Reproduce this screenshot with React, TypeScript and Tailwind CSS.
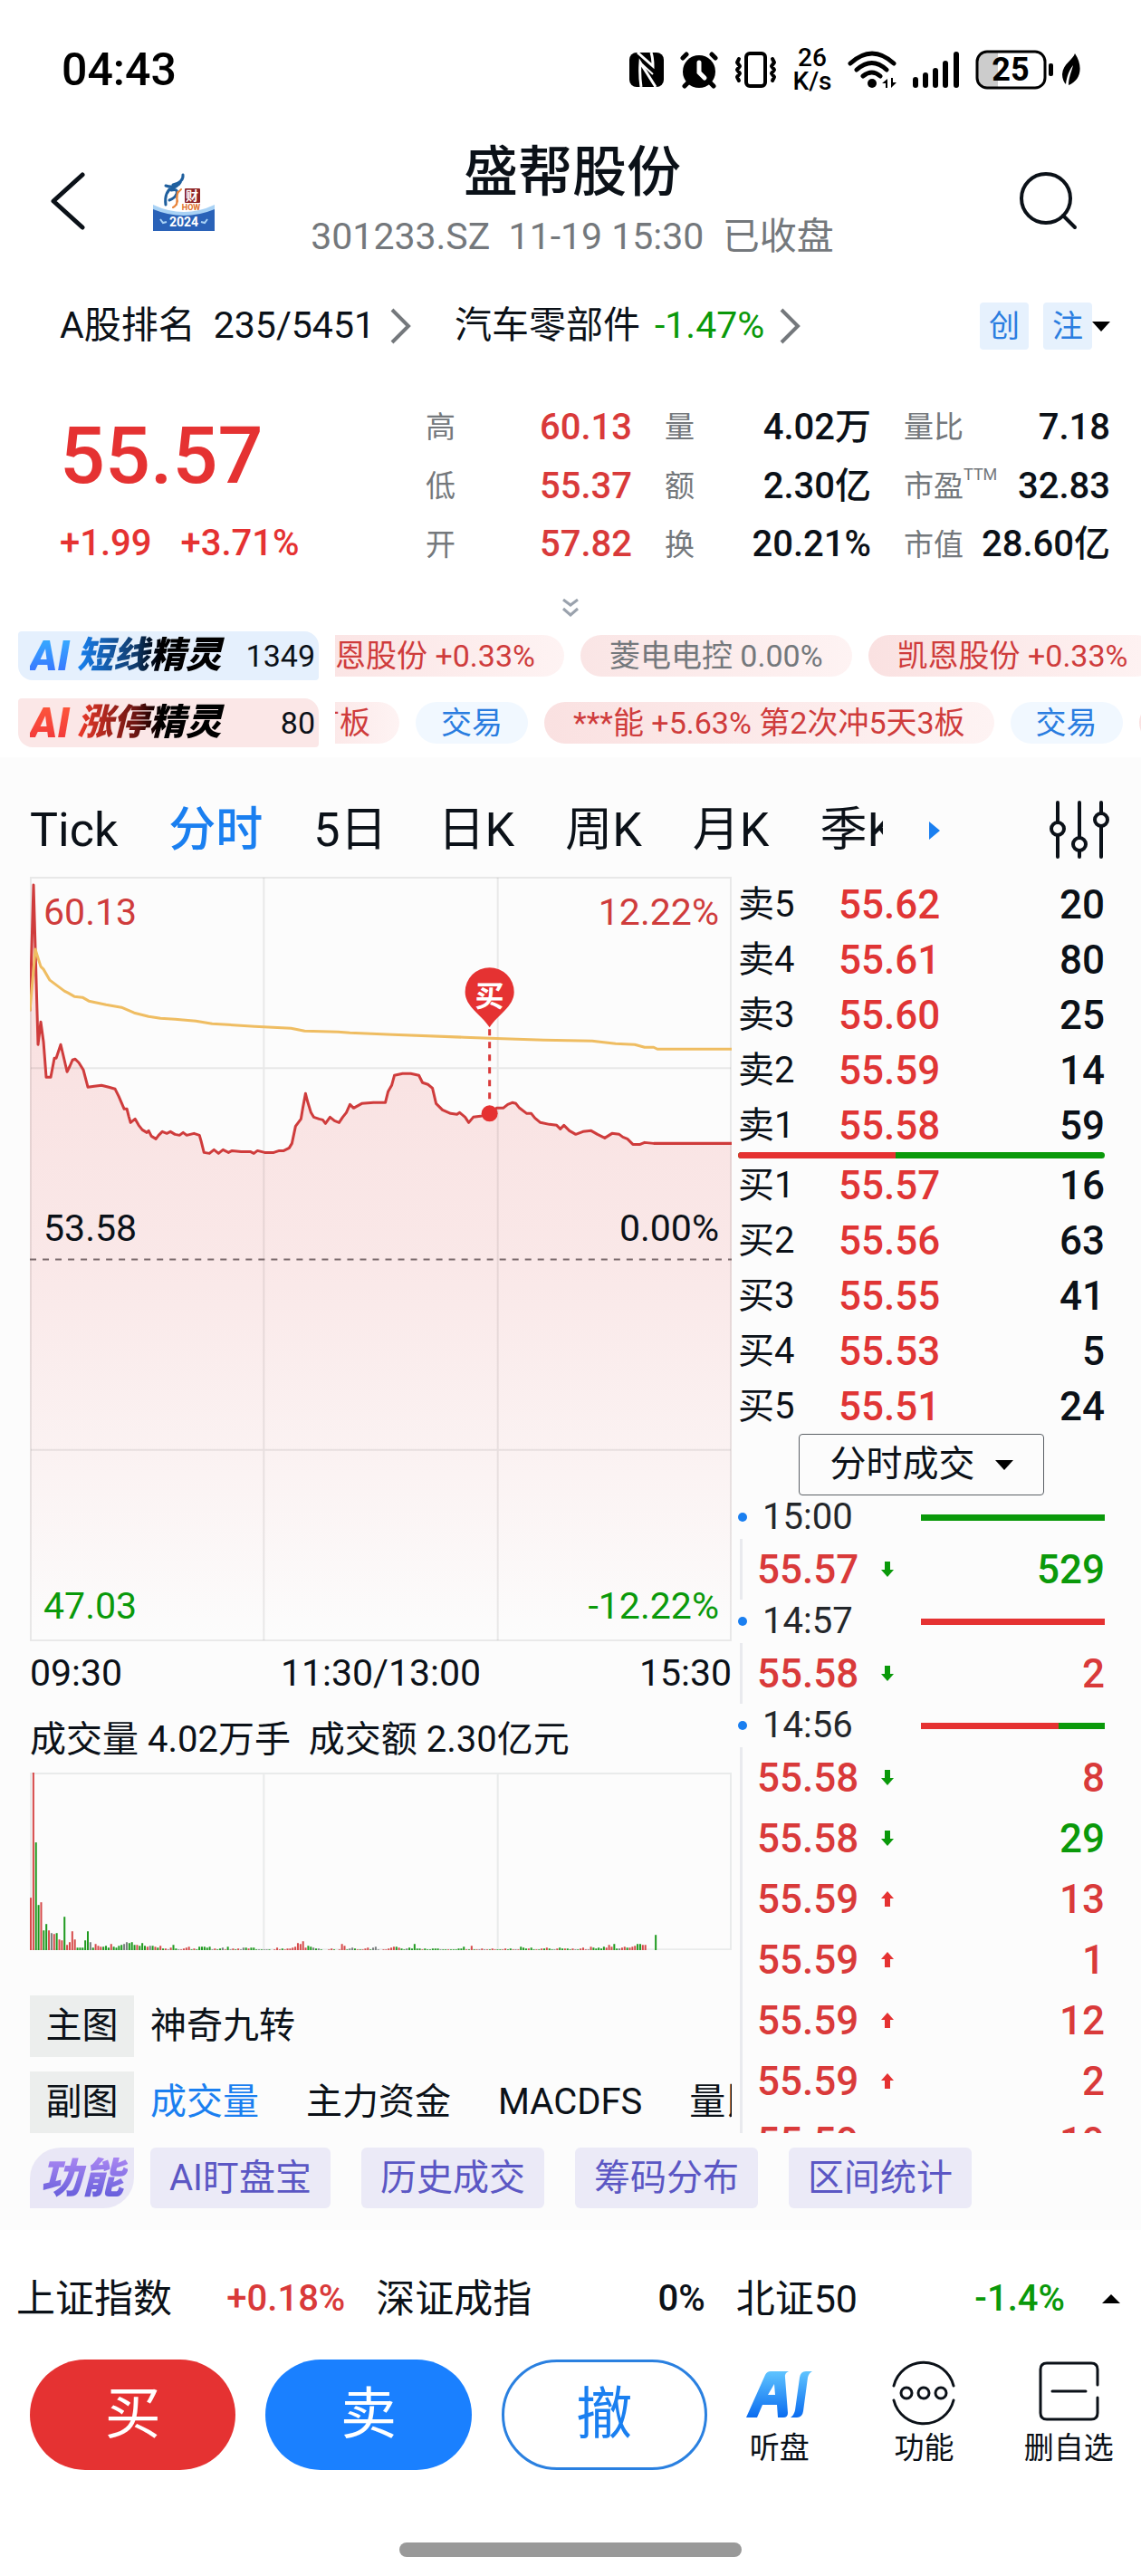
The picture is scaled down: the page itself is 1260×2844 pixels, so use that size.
import type { ReactNode } from "react";

type Quote = { label: string; sup?: string; value: string; up?: boolean };
type Level = { name: string; price: string; volume: number };
type Trade = { price: string; dir: "up" | "down"; volume: number; color: "red" | "green" };
type TradeGroup = { time: string; red: number; trades: Trade[] };

const QUOTES: Quote[] = [
  { label: "高", value: "60.13", up: true },
  { label: "量", value: "4.02万" },
  { label: "量比", value: "7.18" },
  { label: "低", value: "55.37", up: true },
  { label: "额", value: "2.30亿" },
  { label: "市盈", sup: "TTM", value: "32.83" },
  { label: "开", value: "57.82", up: true },
  { label: "换", value: "20.21%" },
  { label: "市值", value: "28.60亿" },
];

const ASKS: Level[] = [
  { name: "卖5", price: "55.62", volume: 20 },
  { name: "卖4", price: "55.61", volume: 80 },
  { name: "卖3", price: "55.60", volume: 25 },
  { name: "卖2", price: "55.59", volume: 14 },
  { name: "卖1", price: "55.58", volume: 59 },
];

const BIDS: Level[] = [
  { name: "买1", price: "55.57", volume: 16 },
  { name: "买2", price: "55.56", volume: 63 },
  { name: "买3", price: "55.55", volume: 41 },
  { name: "买4", price: "55.53", volume: 5 },
  { name: "买5", price: "55.51", volume: 24 },
];

const TRADES: TradeGroup[] = [
  { time: "15:00", red: 0, trades: [{ price: "55.57", dir: "down", volume: 529, color: "green" }] },
  { time: "14:57", red: 100, trades: [{ price: "55.58", dir: "down", volume: 2, color: "red" }] },
  {
    time: "14:56",
    red: 75,
    trades: [
      { price: "55.58", dir: "down", volume: 8, color: "red" },
      { price: "55.58", dir: "down", volume: 29, color: "green" },
      { price: "55.59", dir: "up", volume: 13, color: "red" },
      { price: "55.59", dir: "up", volume: 1, color: "red" },
      { price: "55.59", dir: "up", volume: 12, color: "red" },
      { price: "55.59", dir: "up", volume: 2, color: "red" },
      { price: "55.59", dir: "up", volume: 19, color: "red" },
    ],
  },
];

const PRICE_LINE =
  "0,148 4,9 9,185 12,160 15,182 18,221 23,221 27,200 29,200 34,185 38,202 41,215 44,209 47,202 50,201 54,205 59,213 64,232 71,231 79,230 87,232 94,234 98,242 104,256 107,256 109,264 111,271 116,267 120,274 124,279 129,282 131,280 134,286 139,289 142,285 146,281 151,283 155,281 160,284 165,285 169,282 173,285 181,283 187,285 189,292 192,304 198,305 203,301 208,305 213,301 219,304 223,302 233,303 243,303 247,305 251,302 259,304 269,304 275,302 280,302 286,299 289,294 293,275 299,267 301,255 304,239 306,247 310,260 313,265 319,267 323,268 326,272 331,265 336,269 341,271 345,265 349,260 353,251 357,255 366,250 379,249 392,249 395,237 399,230 402,219 411,217 420,217 429,219 433,227 439,229 444,233 448,250 455,257 464,261 471,262 474,260 480,265 484,271 489,265 497,264 507,261 515,255 522,255 527,251 532,249 536,250 540,255 548,261 553,261 557,266 563,271 573,273 581,274 585,278 589,274 595,280 602,284 610,281 619,280 626,284 634,288 642,283 650,284 654,287 659,289 665,295 673,295 678,293 688,294 774,294";

const AVERAGE_LINE =
  "0,148 6,80 12,99 15,102 22,114 30,120 34,123 38,126 42,128 49,132 58,133 65,137 84,141 101,144 115,150 131,154 144,156 160,157 183,159 201,162 248,165 288,167 303,170 340,171 353,172 400,174 479,177 507,178 567,180 620,181 646,184 667,185 678,188 688,188 692,190 774,190";

// one entry per minute: bar height + colour (r up, g down, k flat)
const VOLUMES = (
  "58r 196r 119g 50g 53r 22g 29g 22r 19k 18r 19g 12r 11r 37g 6r 9r 21r 12r 3g 3g 3g 11g 21g 9k 3g 7r 5r 4r 4g 5g 3g 7r 4g 3g 5g 6g 7k 9k 8g 9g 6g 6r 5g 8g 5g 4r 5k 5g 4r 3g 5r 2g 2r 1k 3r 6g 2g 1k 1r 2r 3r 4r 1g 2r 1g 4g 4g 4g 3g 4g 1k 2r 1g 2g 3k 1r 4g 1k 2r 1g 2r 1k 3k 3g 2r 3g 3g 1g 1k 1g 1k 1k 1g 0k 1r 3r 1r 2g 1r 2r 2r 3r 4r 8r 7r 10r 3r 5g 4g 3k 2g 2k 1g 0k 0r 1r 2r 1g 0k 1r 7r 5r 1g 2k 3k 2g 1r 1g 1r 2r 3r 1g 3k 4k 1k 0r 1r 1r 2r 3r 4r 4g 3r 2g 1g 2k 3g 2g 7g 2g 2g 1r 2g 1g 1g 2g 2g 2g 1k 1g 1g 1r 1g 1g 1g 2g 2g 4g 1r 1g 5r 1g 1r 1k 2r 1k 1r 1g 2r 1r 1g 1g 1r 2r 1g 2g 1r 1k 1r 4g 3g 2g 2r 3g 1g 1r 1g 2r 2g 3r 2g 1g 1k 2r 3g 2g 2r 2g 1g 2r 1k 1g 2r 3r 1r 1k 4r 3g 2g 3g 2g 4g 3r 6r 4r 7g 2g 2k 3r 4r 3g 3r 4r 5r 7g 7g 6r 6r 0k 0k 0k 17g"
).split(" ");

const BAR_FILL: Record<string, string> = { r: "#d64a4a", g: "#1f9a1f", k: "#7a7f7f" };

export default function App() {
  return (
    <div className="min-h-screen bg-white font-['Roboto','Noto_Sans_CJK_SC',sans-serif] text-[40px] text-[#0b1118] overflow-hidden">
      <StatusBar />
      <Header />
      <QuotePanel />
      <Spirits />
      <main className="bg-[#fcfcfc] pb-6">
        <ChartTabs />
        <div className="flex">
          <ChartColumn />
          <BookColumn />
        </div>
        <Features />
      </main>
      <Footer />
    </div>
  );
}

function StatusBar() {
  return (
    <div className="flex h-[154px] items-center justify-between pl-[68px] pr-[66px] text-black">
      <span className="text-[50px] font-medium">04:43</span>
      <div className="flex items-center gap-[18px]">
        <NfcIcon />
        <AlarmIcon />
        <VibrateIcon />
        <div className="flex w-[42px] flex-col items-center text-[28px] font-medium leading-[26px]">
          <span>26</span>
          <span>K/s</span>
        </div>
        <WifiIcon />
        <SignalIcon />
        <BatteryIcon />
      </div>
    </div>
  );
}

function Header() {
  return (
    <header className="flex h-[140px] items-center pl-[52px] pr-[70px]">
      <div className="flex w-[222px] items-center gap-[74px]">
        <button aria-label="返回">
          <svg className="h-[68px] w-[43px]" viewBox="0 0 43 68" fill="none" stroke="#0b1118" strokeWidth="5" strokeLinecap="round" strokeLinejoin="round">
            <path d="M39 3L7 32l32 29" />
          </svg>
        </button>
        <EventLogo />
      </div>
      <div className="flex-1 pt-[2px] text-center">
        <h1 className="text-[60px] font-medium leading-[72px]">盛帮股份</h1>
        <p className="whitespace-pre text-[41px] leading-[68px] text-[#74787c]">301233.SZ  11-19 15:30  已收盘</p>
      </div>
      <div className="flex w-[200px] justify-end">
        <button aria-label="搜索">
          <svg className="h-[68px] w-[68px]" viewBox="0 0 68 68" fill="none" stroke="#0b1118" strokeWidth="4" strokeLinecap="round">
            <circle cx="33" cy="29" r="27" />
            <path d="M52 48l13 13" />
          </svg>
        </button>
      </div>
    </header>
  );
}

function QuotePanel() {
  return (
    <section>
      <div className="mt-[30px] flex h-[72px] items-center pl-[66px] pr-[34px] text-[41px]">
        <a href="#rank" className="flex items-center">
          <span>A股排名</span>
          <span className="ml-5">235/5451</span>
          <ChevronRight />
        </a>
        <a href="#industry" className="ml-[48px] flex items-center">
          <span>汽车零部件</span>
          <span className="ml-4 text-[#0a990a]">-1.47%</span>
          <ChevronRight />
        </a>
        <div className="ml-auto flex items-center">
          <span className="flex h-[52px] w-[54px] items-center justify-center rounded bg-[#e6f1fd] text-[34px] text-[#2a7de0]">创</span>
          <span className="ml-4 flex h-[52px] w-[54px] items-center justify-center rounded bg-[#e6f1fd] text-[34px] text-[#2a7de0]">注</span>
          <svg className="h-[11px] w-5" viewBox="0 0 20 11"><path d="M0 0h20L10 11z" /></svg>
        </div>
      </div>

      <div className="mt-[45px] flex pl-[66px] pr-[34px]">
        <div className="flex-1 font-medium text-[#e53232]">
          <div className="text-[88px] leading-[124px]">55.57</div>
          <div className="flex gap-8 text-[40px] leading-[70px]">
            <span>+1.99</span>
            <span>+3.71%</span>
          </div>
        </div>
        <dl className="grid w-[756px] shrink-0 grid-cols-3 gap-x-9">
          {QUOTES.map((q) => (
            <div key={q.label} className="flex h-[62px] items-center justify-between whitespace-nowrap">
              <dt className="flex text-[33px] text-[#74787c]">
                {q.label}
                {q.sup && <sup className="top-0 text-[18px] leading-6">{q.sup}</sup>}
              </dt>
              <dd className={q.up ? "font-medium text-[#d93a3a]" : "font-medium"}>{q.value}</dd>
            </div>
          ))}
        </dl>
      </div>

      <button aria-label="展开" className="mx-auto mt-[26px] block">
        <svg className="h-6 w-5" viewBox="0 0 20 24" fill="none" stroke="#9aa2ad" strokeWidth="3">
          <path d="M2 1l8 6 8-6M2 11l8 7 8-7" />
        </svg>
      </button>
    </section>
  );
}

function Spirits() {
  return (
    <section className="mb-[11px] mt-3 space-y-5">
      <div className="flex h-[54px] items-center pl-5">
        <div className="flex h-full w-[332px] shrink-0 items-center justify-between rounded-bl-2xl rounded-tr-2xl rounded-br rounded-tl bg-[#e5f0fd] pl-[13px] pr-1">
          <span className="flex items-center font-black italic">
            <span className="bg-gradient-to-b from-[#38b6ff] to-[#3b66ff] bg-clip-text pr-2 text-[46px] leading-[54px] text-transparent">AI</span>
            <span className="bg-gradient-to-r from-[#1683f5] via-[#103a6a] via-40% to-black to-60% bg-clip-text pr-1 text-[40px] leading-[54px] text-transparent">短线精灵</span>
          </span>
          <span className="text-[34px]">1349</span>
        </div>
        <div className="ml-[18px] flex min-w-0 flex-1 gap-[18px] overflow-hidden">
          <div className="-ml-[66px] flex shrink-0">
            <Chip>凯恩股份 +0.33%</Chip>
          </div>
          <Chip tone="gray">菱电电控 0.00%</Chip>
          <Chip>凯恩股份 +0.33%</Chip>
        </div>
      </div>
      <div className="flex h-[54px] items-center pl-5">
        <div className="flex h-full w-[332px] shrink-0 items-center justify-between rounded-bl-2xl rounded-tr-2xl rounded-br rounded-tl bg-[#fbe7e7] pl-[13px] pr-1">
          <span className="flex items-center font-black italic">
            <span className="bg-gradient-to-b from-[#ff5c3b] to-[#f02f3a] bg-clip-text pr-2 text-[46px] leading-[54px] text-transparent">AI</span>
            <span className="bg-gradient-to-r from-[#f03a2a] via-[#6a1512] via-40% to-black to-60% bg-clip-text pr-1 text-[40px] leading-[54px] text-transparent">涨停精灵</span>
          </span>
          <span className="text-[34px]">80</span>
        </div>
        <div className="ml-[18px] flex min-w-0 flex-1 gap-[18px] overflow-hidden">
          <div className="-ml-[61px] flex shrink-0">
            <Chip>首板</Chip>
          </div>
          <Chip tone="blue">交易</Chip>
          <Chip>***能 +5.63% 第2次冲5天3板</Chip>
          <Chip tone="blue">交易</Chip>
          <Chip>首板</Chip>
        </div>
      </div>
    </section>
  );
}

function Chip({ tone = "red", children }: { tone?: "red" | "gray" | "blue"; children: ReactNode }) {
  const tones = {
    red: "bg-gradient-to-r from-[#fae1e1] to-[#fef3f3] text-[#cf3c3c] px-8",
    gray: "bg-gradient-to-r from-[#fae5e5] to-[#fef3f3] text-[#74787c] px-8",
    blue: "bg-[#f1f8ff] text-[#2a7de0] px-7",
  };
  return (
    <a href="#chip" className={`h-[46px] shrink-0 whitespace-nowrap rounded-full text-[34px] leading-[46px] ${tones[tone]}`}>
      {children}
    </a>
  );
}

function ChartTabs() {
  const tabs = ["Tick", "分时", "5日", "日K", "周K", "月K", "季K"];
  return (
    <div className="flex h-[132px] items-center pl-[33px] pr-[34px] pt-[30px]">
      <nav className="flex w-[942px] gap-[56px] overflow-hidden whitespace-nowrap text-[52px]">
        {tabs.map((t) => (
          <button key={t} className={t === "分时" ? "shrink-0 font-medium text-[#1a7ff0]" : "shrink-0"}>
            {t}
          </button>
        ))}
      </nav>
      <svg className="ml-[51px] h-5 w-3" viewBox="0 0 12 20"><path d="M0 0l12 10L0 20z" fill="#1a7ff0" /></svg>
      <button aria-label="设置" className="ml-auto">
        <svg className="h-[66px] w-[68px]" viewBox="0 0 68 66" fill="none" stroke="#0b1118" strokeWidth="4" strokeLinecap="round">
          <path d="M10 2v21M10 39v23M34 2v38M34 56v6M58 2v11M58 29v33" />
          <circle cx="10" cy="31" r="7" />
          <circle cx="34" cy="48" r="7" />
          <circle cx="58" cy="21" r="7" />
        </svg>
      </button>
    </div>
  );
}

function ChartColumn() {
  return (
    <div className="min-w-0 flex-1 pl-[33px]">
      <svg className="block h-auto w-full" viewBox="0 0 774 843" fontSize="41">
        <defs>
          <linearGradient id="area" x1="0" y1="0" x2="0" y2="1">
            <stop offset="0" stopColor="#e53232" stopOpacity="0.15" />
            <stop offset="0.5" stopColor="#e53232" stopOpacity="0.1" />
            <stop offset="1" stopColor="#e53232" stopOpacity="0" />
          </linearGradient>
        </defs>
        <polygon points={`${PRICE_LINE} 774,842 0,842`} fill="url(#area)" />
        <g fill="none" stroke="#000" strokeOpacity="0.08" strokeWidth="2">
          <rect x="1" y="1" width="772" height="841" />
          <path d="M258 1v841M516 1v841M1 211h772M1 632h772" />
        </g>
        <path d="M0 422h774" stroke="#7b6a6c" strokeWidth="2" strokeDasharray="7 7" />
        <polyline points={PRICE_LINE} fill="none" stroke="#cf3c3c" strokeWidth="3" strokeLinejoin="round" />
        <polyline points={AVERAGE_LINE} fill="none" stroke="#efbd62" strokeWidth="3" strokeLinejoin="round" />
        <path d="M507 168v84" stroke="#d93a3a" strokeWidth="3" strokeDasharray="7 7" />
        <circle cx="507" cy="261" r="9" fill="#e53232" />
        <path d="M507 166C498 152 480 143 480 127a27 27 0 0 1 54 0c0 16-18 25-27 39z" fill="#e53232" />
        <text x="507" y="143" fontSize="32" fontWeight="700" fill="#fff" textAnchor="middle">买</text>
        <text x="15" y="53" fill="#cf3c3c">60.13</text>
        <text x="760" y="53" fill="#cf3c3c" textAnchor="end">12.22%</text>
        <text x="15" y="401" fill="#0b1118">53.58</text>
        <text x="760" y="401" fill="#0b1118" textAnchor="end">0.00%</text>
        <text x="15" y="818" fill="#0a990a">47.03</text>
        <text x="760" y="818" fill="#0a990a" textAnchor="end">-12.22%</text>
      </svg>
      <div className="flex h-[72px] items-center justify-between text-[41px]">
        <span>09:30</span>
        <span>11:30/13:00</span>
        <span>15:30</span>
      </div>
      <p className="h-[73px] whitespace-pre leading-[73px]">成交量 4.02万手  成交额 2.30亿元</p>
      <svg className="block h-auto w-full" viewBox="0 0 774 196">
        <g fill="none" stroke="#e9ebeb" strokeWidth="2">
          <rect x="1" y="1" width="772" height="194" />
          <path d="M258 1v194M516 1v194" />
        </g>
        {VOLUMES.map((v, i) => {
          const h = parseInt(v);
          return <rect key={i} x={i * 2.86} y={196 - h} width="2" height={h} fill={BAR_FILL[v.slice(-1)]} />;
        })}
      </svg>
      <div className="mt-[50px] flex items-center gap-[18px]">
        <span className="flex h-[68px] w-[115px] shrink-0 items-center justify-center bg-[#eceeed]">主图</span>
        <button>神奇九转</button>
      </div>
      <div className="mt-4 flex items-center gap-[18px]">
        <span className="flex h-[68px] w-[115px] shrink-0 items-center justify-center bg-[#eceeed]">副图</span>
        <div className="flex min-w-0 gap-[52px] overflow-hidden whitespace-nowrap">
          <button className="shrink-0 text-[#1a7ff0]">成交量</button>
          <button className="shrink-0">主力资金</button>
          <button className="shrink-0">MACDFS</button>
          <button className="shrink-0">量比</button>
        </div>
      </div>
    </div>
  );
}

function BookColumn() {
  return (
    <div className="ml-[7px] mr-10 flex w-[405px] shrink-0 flex-col">
      <BookTable levels={ASKS} />
      <div className="-my-px flex h-[7px] overflow-hidden rounded-full bg-[#0a990a]">
        <div className="w-[43%] bg-[#e53232]" />
      </div>
      <BookTable levels={BIDS} />
      <button className="ml-[67px] flex h-[68px] w-[271px] items-center justify-center gap-[22px] rounded border border-[#5b6066]">
        分时成交
        <svg className="h-[11px] w-5" viewBox="0 0 20 11"><path d="M0 0h20L10 11z" /></svg>
      </button>
      <div className="h-[704px] overflow-hidden">
        {TRADES.map((g) => (
          <div key={g.time}>
            <div className="flex h-12 items-center">
              <span className="h-[10px] w-[10px] rounded-full bg-[#1a7ff0]" />
              <span className="ml-[17px] text-[#24272b]">{g.time}</span>
              <span className="ml-auto flex h-[7px] w-[203px] bg-[#0a990a]">
                <span className="bg-[#e53232]" style={{ width: `${g.red}%` }} />
              </span>
            </div>
            <ul className="ml-[2px] border-l-[3px] border-[#e9eaee]">
              {g.trades.map((t, i) => (
                <li key={i} className="flex h-[67px] items-center text-[44px] font-medium">
                  <span className="ml-4 w-[137px] text-[#d93a3a]">{t.price}</span>
                  <TradeArrow dir={t.dir} />
                  <span className={t.color === "red" ? "ml-auto text-[#d93a3a]" : "ml-auto text-[#0a990a]"}>{t.volume}</span>
                </li>
              ))}
            </ul>
          </div>
        ))}
      </div>
    </div>
  );
}

function BookTable({ levels }: { levels: Level[] }) {
  return (
    <table className="w-full">
      <tbody>
        {levels.map((l) => (
          <tr key={l.name} className="h-[61px]">
            <th className="w-[111px] p-0 text-left font-normal leading-[60px]">{l.name}</th>
            <td className="p-0 text-[44px] font-medium leading-[60px] text-[#e03535]">{l.price}</td>
            <td className="p-0 text-right text-[44px] font-medium leading-[60px]">{l.volume}</td>
          </tr>
        ))}
      </tbody>
    </table>
  );
}

function TradeArrow({ dir }: { dir: "up" | "down" }) {
  return (
    <svg className="h-[17px] w-[14px]" viewBox="0 0 14 17">
      {dir === "up" ? (
        <path d="M7 0l7 8h-4v9H4V8H0z" fill="#e53232" />
      ) : (
        <path d="M7 17l7-8h-4V0H4v9H0z" fill="#0a990a" />
      )}
    </svg>
  );
}

function Features() {
  return (
    <div className="mt-4 flex items-center pl-[33px]">
      <span className="flex h-[67px] w-[115px] items-center justify-center rounded-br-[34px] rounded-tl-[34px] bg-[#e9e7f6]">
        <span className="bg-gradient-to-b from-[#b48cf5] to-[#5a55d6] bg-clip-text px-1 text-[46px] font-black italic leading-[60px] text-transparent">功能</span>
      </span>
      <div className="ml-[18px] flex gap-[34px]">
        {["AI盯盘宝", "历史成交", "筹码分布", "区间统计"].map((f) => (
          <button key={f} className="h-[67px] rounded-md bg-[#ebeaf7] px-[21px] text-[#5b57c4]">
            {f}
          </button>
        ))}
      </div>
    </div>
  );
}

function Footer() {
  return (
    <footer>
      <div className="flex h-[143px] items-center pl-[18px] pr-[23px] pt-2 text-[43px]">
        <div className="grid flex-1 grid-cols-3 gap-[34px] whitespace-nowrap">
          <a href="#sh" className="flex items-center justify-between">
            上证指数<span className="text-[40px] font-medium text-[#d93a3a]">+0.18%</span>
          </a>
          <a href="#sz" className="flex items-center justify-between">
            深证成指<span className="text-[40px] font-medium">0%</span>
          </a>
          <a href="#bj" className="flex items-center justify-between">
            北证50<span className="text-[40px] font-medium text-[#0a990a]">-1.4%</span>
          </a>
        </div>
        <svg className="ml-[41px] h-[10px] w-5" viewBox="0 0 20 10"><path d="M0 10h20L10 0z" /></svg>
      </div>
      <div className="flex items-center pl-[33px]">
        <div className="grid flex-1 grid-cols-3 gap-[33px] text-[62px] leading-none">
          <button className="h-[122px] rounded-full bg-[#e53232] text-white">买</button>
          <button className="h-[122px] rounded-full bg-[#1a80ff] text-white">卖</button>
          <button className="h-[122px] rounded-full border-[3px] border-[#2a80e0] text-[#1a7ff0]">撤</button>
        </div>
        <div className="grid w-[479px] grid-cols-3">
          <Tool label="听盘">
            <svg className="h-[74px] w-[76px]" viewBox="0 0 76 74">
              <defs>
                <linearGradient id="ai" x1="0" y1="0" x2="0" y2="1">
                  <stop offset="0" stopColor="#5fc4ff" />
                  <stop offset="1" stopColor="#0a6cf0" />
                </linearGradient>
              </defs>
              <g fill="url(#ai)">
                <path fillRule="evenodd" d="M1 64L22 17q2-4 6-4h20q-5 2-4 7l3 39q0 5-5 5h-6l-1-14H19l-6 14zM25 39h8l-1-12z" />
                <path d="M50 64q4-3 5-8l5-36q1-7 7-7h7q-4 2-5 7l-5 37q-1 7-7 7z" />
              </g>
            </svg>
          </Tool>
          <Tool label="功能">
            <svg className="h-[74px] w-[74px]" viewBox="0 0 74 74" fill="none" stroke="#0b1118" strokeWidth="3" strokeLinecap="round">
              <path d="M4 29a34 34 0 0 1 66 0M4 45a34 34 0 0 0 66 0" />
              <circle cx="18" cy="37" r="6" />
              <circle cx="37" cy="37" r="6" />
              <circle cx="56" cy="37" r="6" />
            </svg>
          </Tool>
          <Tool label="删自选">
            <svg className="h-[74px] w-[74px]" viewBox="0 0 74 74" fill="none" stroke="#0b1118" strokeWidth="3" strokeLinecap="round">
              <path d="M69 28V11q0-7-7-7H13q-7 0-7 7v48q0 7 7 7h49q7 0 7-7V42M19 35h37" />
            </svg>
          </Tool>
        </div>
      </div>
      <div className="mx-auto mb-[21px] mt-20 h-4 w-[378px] rounded-full bg-[#999]" />
    </footer>
  );
}

function Tool({ label, children }: { label: string; children: ReactNode }) {
  return (
    <button className="flex flex-col items-center text-[33px] leading-[48px]">
      {children}
      {label}
    </button>
  );
}

function ChevronRight() {
  return (
    <svg className="ml-4 h-10 w-6" viewBox="0 0 24 40" fill="none" stroke="#74787c" strokeWidth="4">
      <path d="M3 2l18 18L3 38" />
    </svg>
  );
}

function EventLogo() {
  return (
    <svg className="h-[66px] w-[68px]" viewBox="0 0 68 66" fontWeight="700">
      <path d="M0 35q34 16 68 0v29H0z" fill="#a9d2f5" />
      <path d="M0 40q34 14 68 0v24H0z" fill="#2a62b8" />
      <g fill="none" strokeLinecap="round">
        <path d="M33 2q1 8-11 11M31 8q-1 5-8 8M14 14q9 3 15-2M22 15q-10 6-8 20M20 19q8-2 6 4-2 5-8 7" stroke="#1f5f9e" strokeWidth="3" />
        <path d="M31 18q-7 6-4 13-1 5-5 7M27 21l-1 14" stroke="#e8843a" strokeWidth="2" />
      </g>
      <rect x="35" y="17" width="17" height="16" rx="1" fill="#8e2426" />
      <text x="43" y="30" fontSize="14" fill="#fff" textAnchor="middle">财</text>
      <text x="42" y="41" fontSize="9" fill="#e0702a" textAnchor="middle">HOW</text>
      <text x="34" y="59" fontSize="14" fill="#fff" textAnchor="middle">2024</text>
      <path d="M8 51l3 4 4-1M60 51l-3 4-4-1" stroke="#a9d2f5" strokeWidth="2" fill="none" />
    </svg>
  );
}

function NfcIcon() {
  return (
    <svg className="h-10 w-[38px]" viewBox="0 0 38 40">
      <rect y="1" width="38" height="38" rx="8" />
      <path d="M9 1l17 15q0-9-2-15M29 39L12 12q-1 14 1 27" fill="none" stroke="#fff" strokeWidth="3" />
      <path d="M14 14l12 11" stroke="#fff" strokeWidth="2" />
    </svg>
  );
}

function AlarmIcon() {
  return (
    <svg className="h-[42px] w-[42px]" viewBox="0 0 42 42" fill="none" stroke="#000" strokeWidth="5" strokeLinecap="round">
      <circle cx="21" cy="23" r="18" fill="#000" stroke="none" />
      <path d="M3 8l4-4M39 8l-4-4M9 35l-4 4M33 35l4 4" />
      <path d="M21 13v11l6 6" stroke="#fff" strokeWidth="5" />
    </svg>
  );
}

function VibrateIcon() {
  return (
    <svg className="h-10 w-[47px]" viewBox="0 0 47 40" fill="none" stroke="#000" strokeWidth="4" strokeLinecap="round" strokeLinejoin="round">
      <rect x="13" y="2" width="21" height="36" rx="4" />
      <path d="M5 8l-2 4 3 4-3 4 3 4-3 4 2 4M42 8l2 4-3 4 3 4-3 4 3 4-2 4" />
    </svg>
  );
}

function WifiIcon() {
  return (
    <svg className="h-[42px] w-[54px]" viewBox="0 0 54 42" fill="none" stroke="#000" strokeWidth="5" strokeLinecap="round">
      <path d="M3 14q24-22 48 0M10 21q17-15 33 0M17 28q10-8 19 0" />
      <circle cx="27" cy="36" r="5" fill="#000" stroke="none" />
      <path d="M38 36l6-5v10h-2v-5zM54 35l-6 6V30h2v5z" fill="#000" stroke="none" />
    </svg>
  );
}

function SignalIcon() {
  return (
    <svg className="h-[42px] w-[51px]" viewBox="0 0 51 42" stroke="#000" strokeWidth="6" strokeLinecap="round">
      <path d="M3 32v6M14 27v11M25 22v16M36 14v24M48 4v34" />
    </svg>
  );
}

function BatteryIcon() {
  return (
    <svg className="h-11 w-[117px]" viewBox="0 0 117 44">
      <path d="M12 3h13v38H12q-9 0-9-9V12q0-9 9-9z" fill="#ccc" />
      <rect x="2" y="2" width="75" height="40" rx="11" fill="none" stroke="#000" strokeWidth="3" />
      <text x="39" y="34" fontSize="36" fontWeight="700" textAnchor="middle">25</text>
      <rect x="81" y="15" width="5" height="14" rx="2" />
      <path d="M110 4c-2 7-13 11-14 23 0 5 2 9 4 11 1-9 4-16 8-21-2 8-5 14-5 22 13-5 17-20 7-35z" />
    </svg>
  );
}
